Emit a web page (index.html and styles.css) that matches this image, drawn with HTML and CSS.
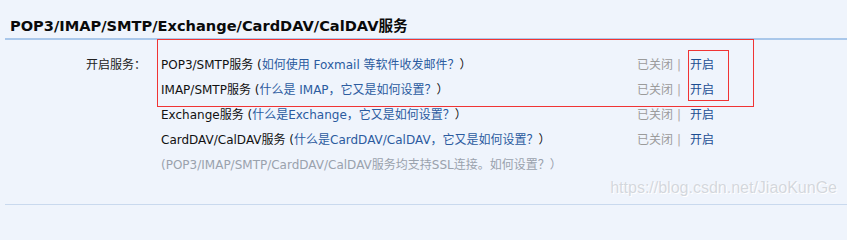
FILE: index.html
```html
<!DOCTYPE html>
<html lang="zh-CN">
<head>
<meta charset="utf-8">
<title>POP3/IMAP/SMTP/Exchange/CardDAV/CalDAV服务</title>
<link rel="stylesheet" href="styles.css">
</head>
<body>
<div class="page">
  <div class="section-head">
    <h2 class="section-title">POP3/IMAP/SMTP/Exchange/CardDAV/CalDAV服务</h2>
  </div>
  <div class="form">
    <div class="label">开启服务：</div>
    <div class="services">
      <div class="row">
        <span class="desc"><span class="name">POP3/SMTP服务</span> (<a class="help">如何使用 Foxmail 等软件收发邮件？</a>）</span>
        <span class="status"><span class="off">已关闭</span><span class="sep">|</span><a class="on">开启</a></span>
      </div>
      <div class="row">
        <span class="desc"><span class="name">IMAP/SMTP服务</span> (<a class="help">什么是 IMAP，它又是如何设置？</a>）</span>
        <span class="status"><span class="off">已关闭</span><span class="sep">|</span><a class="on">开启</a></span>
      </div>
      <div class="row">
        <span class="desc"><span class="name">Exchange服务</span> (<a class="help">什么是Exchange，它又是如何设置？</a>）</span>
        <span class="status"><span class="off">已关闭</span><span class="sep">|</span><a class="on">开启</a></span>
      </div>
      <div class="row">
        <span class="desc"><span class="name">CardDAV/CalDAV服务</span> (<a class="help">什么是CardDAV/CalDAV，它又是如何设置？</a>）</span>
        <span class="status"><span class="off">已关闭</span><span class="sep">|</span><a class="on">开启</a></span>
      </div>
      <div class="row note">(POP3/IMAP/SMTP/CardDAV/CalDAV服务均支持SSL连接。<a class="note-link">如何设置？</a>）</div>
    </div>
  </div>
  <div class="mark mark-rows"></div>
  <div class="mark mark-switch"></div>
  <div class="watermark">https://blog.csdn.net/JiaoKunGe</div>
</div>
</body>
</html>
```

FILE: styles.css
```css
html, body {
  margin: 0;
  padding: 0;
  background: #eff4fc;
}

.page {
  position: relative;
  width: 847px;
  height: 207px;
  overflow: hidden;
  font-family: "DejaVu Sans", "Noto Sans CJK SC", sans-serif;
  font-size: 12px;
  color: #111;
}

.section-head {
  margin-left: 5px;
  padding: 16px 0 2px 5px;
  border-bottom: 2px solid #a9c7ea;
}

.section-title {
  margin: 0;
  font-size: 14.6px;
  line-height: 20px;
  font-weight: bold;
  color: #0a0a0a;
}

.form {
  display: flex;
  margin-left: 5px;
  padding: 13px 0 26px 0;
  border-bottom: 1px solid #c9d9ee;
}

.label {
  width: 141px;
  text-align: right;
  line-height: 25px;
  color: #222;
}

.services {
  margin-left: 15px;
  display: flex;
  flex-direction: column;
}

.row {
  display: flex;
  line-height: 25px;
  white-space: nowrap;
}

.desc {
  width: 476px;
}

.name {
  color: #111;
}

.help {
  color: #2b5b9f;
  text-decoration: none;
}

.status {
  display: flex;
}

.off {
  color: #9b9b9b;
}

.sep {
  color: #b0aaa4;
  margin: 0 9px 0 4px;
}

.on {
  color: #1c4d92;
  text-decoration: none;
}

.note {
  color: #9aa2ad;
}

.note-link {
  color: #9aa2ad;
  text-decoration: none;
}

.mark {
  position: absolute;
  border: 1px solid #f03434;
  box-sizing: border-box;
}

.mark-rows {
  left: 157px;
  top: 39px;
  width: 597px;
  height: 68px;
}

.mark-switch {
  left: 688px;
  top: 50px;
  width: 41px;
  height: 51px;
}

.watermark {
  position: absolute;
  right: 10px;
  top: 178px;
  font-family: "Liberation Sans", Arial, sans-serif;
  font-size: 16px;
  line-height: 20px;
  color: #d3d7dd;
  text-shadow: 0 0 1px #ffffff, 1px 1px 0 #ffffff;
}
```
